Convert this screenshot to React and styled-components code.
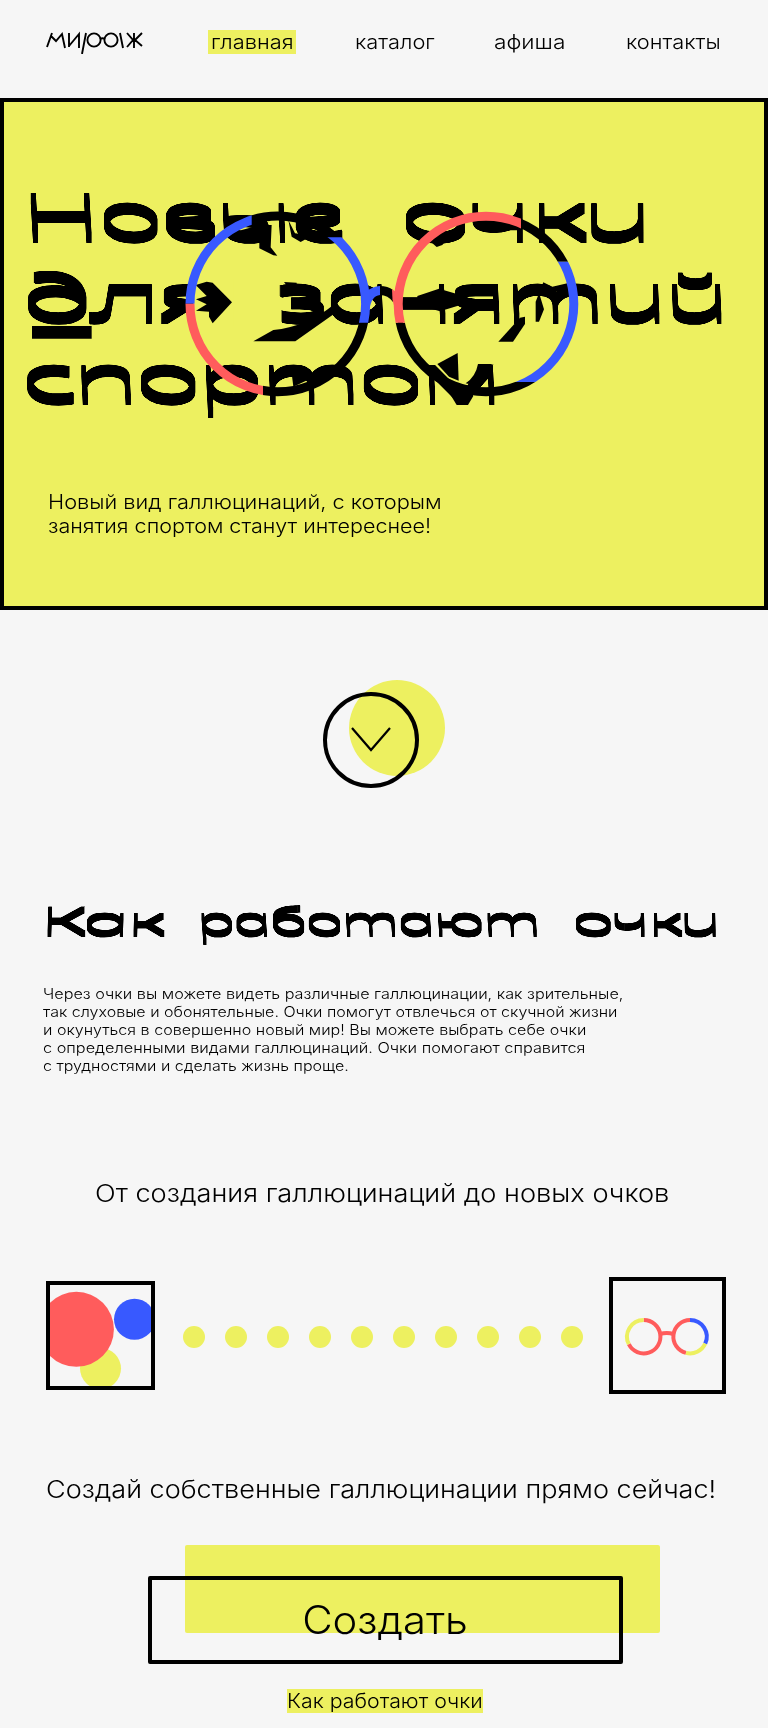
import React from "react";
import styled, { createGlobalStyle } from "styled-components";

const yellow = "#edf060";
const red = "#ff5c5c";
const blue = "#3859ff";
const paper = "#f6f6f6";

const GlobalStyle = createGlobalStyle`
  * { box-sizing: border-box; }
  body {
    margin: 0;
    background: ${paper};
    color: #000;
    font-family: Inter, "Liberation Sans", sans-serif;
    font-weight: 300;
  }
  h1, h2, h3, p { margin: 0; font-weight: 300; }
  a { color: inherit; text-decoration: none; }
`;

const Page = styled.div`
  width: 768px;
  height: 1728px;
  overflow: hidden;
  display: flex;
  flex-direction: column;
`;

const Header = styled.header`
  height: 98px;
  padding: 30px 48px 0 46px;
  display: flex;
  align-items: flex-start;
`;

const Logo = styled.svg`
  flex: none;
  width: 98px;
  height: 24px;
  margin-right: 64px;
`;

const Nav = styled.nav`
  flex: 1;
  display: flex;
  justify-content: space-between;
`;

const NavLink = styled.a`
  width: ${(p) => p.$width}px;
  padding-left: ${(p) => (p.$active ? 3 : 0)}px;
  background: ${(p) => (p.$active ? yellow : "transparent")};
  font-size: 19.4px;
  line-height: 24px;
`;

/* Widens a run of text horizontally from its left edge. */
const Wide = styled.span`
  display: block;
  width: max-content;
  white-space: nowrap;
  transform: scaleX(${(p) => p.$x});
  transform-origin: ${(p) => p.$origin || "left"};
`;

const Hero = styled.section`
  height: 512px;
  border: 4px solid #000;
  background: ${yellow};
`;

const HeroTitle = styled.h1`
  height: 388px;
`;

const Artwork = styled.svg`
  display: block;
  overflow: visible;
`;

const HeroText = styled.p`
  padding-left: 44px;
  font-size: 19.4px;
  line-height: 24px;
`;

const ScrollButton = styled.a`
  display: block;
  width: 122px;
  height: 108px;
  margin: 70px 0 0 323px;
`;

const DisplayHeading = styled.h2`
  height: 60px;
  margin-top: 107px;
`;

const Article = styled.p`
  margin: 30px 0 0 43px;
  font-size: 14.5px;
  line-height: 18px;
`;

const Caption = styled.h3`
  margin: ${(p) => p.$top}px 0 0 ${(p) => p.$left}px;
  font-size: 24.3px;
  line-height: 30px;
`;

const Process = styled.div`
  height: 117px;
  margin: 69px 42px 0 46px;
  display: flex;
  align-items: center;
  justify-content: space-between;
`;

const Frame = styled.div`
  width: ${(p) => p.$size}px;
  height: ${(p) => p.$size}px;
  border: 4px solid #000;
  overflow: hidden;
`;

const Dots = styled.div`
  display: flex;
  gap: 20px;
  padding: 2px 0 0 2px;
`;

const Dot = styled.i`
  width: 22px;
  height: 22px;
  border-radius: 50%;
  background: ${yellow};
`;

const Action = styled.div`
  width: 475px;
  height: 88px;
  margin: 41px 0 0 185px;
  border-radius: 2px;
  background: ${yellow};
`;

const CreateButton = styled.button`
  position: relative;
  top: 31px;
  left: -37px;
  display: flex;
  align-items: center;
  justify-content: center;
  width: 475px;
  height: 88px;
  padding: 0 2px 2px 0;
  border: 4px solid #000;
  border-radius: 2px;
  background: transparent;
  color: #000;
  font: 300 38.8px Inter, "Liberation Sans", sans-serif;
`;

const HowLink = styled.a`
  width: 196px;
  margin: 56px 0 0 287px;
  background: ${yellow};
  font-size: 19.4px;
  line-height: 24px;
`;

const WordText = styled.text`
  font-family: "Noto Sans", Inter, sans-serif;
  font-style: italic;
  font-weight: 200;
  font-size: ${(p) => p.$size}px;
  letter-spacing: ${(p) => p.$size * -0.045}px;
`;

/* Cursive letter forms, straightened and doubled in width. */
function Word({ x, y, width, size, children }) {
  return (
    <WordText
      transform={`translate(${x} ${y}) scale(2 1) skewX(14.5)`}
      textLength={width / 2}
      lengthAdjust="spacingAndGlyphs"
      $size={size}
    >
      {children}
    </WordText>
  );
}

/* Thickens only the horizontal strokes. */
function Thicken({ id, amount }) {
  return (
    <filter id={id} x="-5%" y="-20%" width="110%" height="140%">
      <feMorphology operator="dilate" radius={`0 ${amount}`} />
      <feComponentTransfer>
        <feFuncA type="linear" slope="1.8" />
      </feComponentTransfer>
    </filter>
  );
}

function Glasses() {
  return (
    <g fill="none" strokeWidth="9">
      <clipPath id="l1"><rect x="180" y="200" width="71.7" height="103.7" /></clipPath>
      <clipPath id="l2"><rect x="300" y="237.3" width="80" height="85.4" /></clipPath>
      <clipPath id="l3"><rect x="180" y="303.7" width="83" height="100" /></clipPath>
      <clipPath id="l4"><path d="M251.700 200H300V237.300H380V210H251.700ZM300 322.700H380V410H263V360H300Z" /></clipPath>
      <clipPath id="r1"><rect x="390" y="200" width="131" height="122.7" /></clipPath>
      <clipPath id="r2"><rect x="510" y="261.7" width="80" height="120.3" /></clipPath>
      <clipPath id="r3"><path d="M521 200H590V261.700H521ZM390 322.700H510V382H590V410H390Z" /></clipPath>
      <path d="M251.700 220A87.800 87.800 0 0 1 335 237.300" stroke="#000" />
      <circle cx="277.800" cy="304" r="87.800" stroke="#000" clipPath="url(#l4)" />
      <circle cx="486" cy="304" r="87.800" stroke="#000" clipPath="url(#r3)" />
      <path d="M380 286Q388 286 393 290V302Q388 295 380 295Z" fill="#000" stroke="none" />
      <path d="M366 292Q372 286.500 380 286V295Q371 296 369.500 310H364Z" fill={blue} stroke="none" />
      <path d="M392 289L396 292V312L392.500 300Z" fill={red} stroke="none" />
      <circle cx="277.800" cy="304" r="87.800" stroke={blue} clipPath="url(#l1)" />
      <circle cx="277.800" cy="304" r="87.800" stroke={blue} clipPath="url(#l2)" />
      <circle cx="277.800" cy="304" r="87.800" stroke={red} clipPath="url(#l3)" />
      <circle cx="486" cy="304" r="87.800" stroke={red} clipPath="url(#r1)" />
      <circle cx="486" cy="304" r="87.800" stroke={blue} clipPath="url(#r2)" />
    </g>
  );
}

/* Refraction shards seen through the lenses. */
function Shards() {
  return (
    <>
      <g transform="translate(0 170) scale(.33333)">
        <path d="M96 468H275V506H96Z" />
        <path fill={yellow} d="M580 325H700V470H580Z" />
        <path d="M587 345L620 335L638 338L696 397L638 460L627 440V425L588 422L620 403L588 388L620 378Z" />
        <path d="M690 190L780 165H815L812 232L832 257L820 256L778 235V210Z" />
        <path d="M865 150L885 190L990 203L930 200L902 216L875 200Z" />
        <path d="M760 514L820 480Q920 470 1000 405L1005 430L886 514Z" />
        <path d="M852 336L890 338V375L852 374L868 356Z" />
        <path d="M872 585L955 615L880 650Z" />
      </g>
      <g transform="translate(384 170) scale(.33333)">
        <path d="M140 215L165 190L200 195L175 225L158 231Z" />
        <path d="M320 168L345 181H410V155Z" />
        <path d="M100 378L165 356L232 376V404L168 424L100 404Z" />
        <path d="M343 515L408 443L423 440V462L387 515Z" />
        <path d="M455 395L478 337L505 350L550 340V358L505 366L475 358L468 378L480 418L465 455H455Z" />
        <path d="M160 582L221 549L224 632L195 620Z" />
        <path d="M245 640Q275 620 282 582H330Q290 592 280 648Z" />
        <path d="M185 650L268 678L252 705H218Z" />
      </g>
    </>
  );
}

const heroWords = [
  ["Новые", 28, 237.5, 322],
  ["очки", 406, 237.5, 250],
  ["для", 28, 318.5, 196],
  ["занятий", 284, 318.5, 449],
  ["спортом", 28, 399.5, 478],
];

const articleLines = [
  ["Через очки вы можете видеть различные галлюцинации, как зрительные,", 1.119],
  ["так слуховые и обонятельные. Очки помогут отвлечься от скучной жизни", 1.106],
  ["и окунуться в совершенно новый мир! Вы можете выбрать себе очки", 1.109],
  ["с определенными видами галлюцинаций. Очки помогают справится", 1.124],
  ["с трудностями и сделать жизнь проще.", 1.106],
];

export default function App() {
  return (
    <>
      <GlobalStyle />
      <Page>
        <Header>
          <Logo viewBox="0 0 98 24" fill="none" stroke="#000" strokeWidth="1.9">
            <path d="M6 3L1 17M5 6L10 11L16 4L19 18M23 3V17M23 16L33 4V18M40 3L36 24M74 3L77 18M81 3L87 10L81 17M88 3V18M96 3L89 10L96 16" />
            <circle cx="48" cy="10" r="6.600" />
            <circle cx="65" cy="10" r="6.600" />
            <path d="M54 9Q56.500 7.500 59 9" />
          </Logo>
          <Nav>
            <NavLink $active $width={88} href="#"><Wide $x={1.125}>главная</Wide></NavLink>
            <NavLink $width={81} href="#"><Wide $x={1.125}>каталог</Wide></NavLink>
            <NavLink $width={73} href="#"><Wide $x={1.17}>афиша</Wide></NavLink>
            <NavLink $width={94} href="#"><Wide $x={1.124}>контакты</Wide></NavLink>
          </Nav>
        </Header>

        <Hero>
          <HeroTitle>
            <Artwork width="760" height="388" viewBox="4 102 760 388">
              <Thicken id="fat" amount={5} />
              <g filter="url(#fat)">
                {heroWords.map(([word, x, y, width]) => (
                  <Word key={word} x={x} y={y} width={width} size={56}>{word}</Word>
                ))}
              </g>
              <Shards />
              <Glasses />
            </Artwork>
          </HeroTitle>
          <HeroText>
            <Wide $x={1.124}>Новый вид галлюцинаций, с которым</Wide>
            <Wide $x={1.11}>занятия спортом станут интереснее!</Wide>
          </HeroText>
        </Hero>

        <ScrollButton href="#how" aria-label="Вниз">
          <svg width="122" height="108" fill="none" stroke="#000">
            <circle cx="74" cy="48" r="48" fill={yellow} stroke="none" />
            <circle cx="48" cy="60" r="46" strokeWidth="4" />
            <path d="M29 48L48 70L67 48" strokeWidth="2.200" />
          </svg>
        </ScrollButton>

        <DisplayHeading id="how">
          <Artwork width="768" height="60" viewBox="0 895 768 60">
            <Thicken id="fat-small" amount={3} />
            <g filter="url(#fat-small)">
              <Word x={44} y={934} width={123} size={34}>Как</Word>
              <Word x={201} y={934} width={342} size={34}>работают</Word>
              <Word x={576} y={934} width={147} size={34}>очки</Word>
            </g>
          </Artwork>
        </DisplayHeading>

        <Article>
          {articleLines.map(([line, x]) => <Wide key={line} $x={x}>{line}</Wide>)}
        </Article>

        <Caption $top={103} $left={95}><Wide $x={1.12}>От создания галлюцинаций до новых очков</Wide></Caption>

        <Process>
          <Frame $size={109}>
            <svg width="101" height="101" viewBox="50 1285 101 101">
              <circle cx="100.500" cy="1368.500" r="20.500" fill={yellow} />
              <circle cx="134.500" cy="1319.300" r="20.500" fill={blue} />
              <circle cx="76.400" cy="1329.300" r="37.500" fill={red} />
            </svg>
          </Frame>
          <Dots>
            {Array.from({ length: 10 }, (_, i) => <Dot key={i} />)}
          </Dots>
          <Frame $size={117}>
            <svg width="109" height="109" viewBox="613 1281 109 109" fill="none" strokeWidth="4">
              <path d="M643.700 1320A16.700 16.700 0 1 1 628.800 1344.200" stroke={red} />
              <path d="M643.700 1320A16.700 16.700 0 0 0 628.800 1344.200" stroke={yellow} />
              <path d="M690 1320A16.700 16.700 0 0 0 686 1352.900" stroke={red} />
              <path d="M690 1320A16.700 16.700 0 0 1 705.200 1343.700" stroke={blue} />
              <path d="M705.200 1343.700A16.700 16.700 0 0 1 686 1352.900" stroke={yellow} />
              <path d="M660 1334Q666.800 1332 673.500 1334" stroke={red} />
            </svg>
          </Frame>
        </Process>

        <Caption $top={80} $left={46}><Wide $x={1.1135}>Создай собственные галлюцинации прямо сейчас!</Wide></Caption>

        <Action>
          <CreateButton><Wide $x={1.076} $origin="center">Создать</Wide></CreateButton>
        </Action>
        <HowLink href="#how"><Wide $x={1.1}>Как работают очки</Wide></HowLink>
      </Page>
    </>
  );
}
